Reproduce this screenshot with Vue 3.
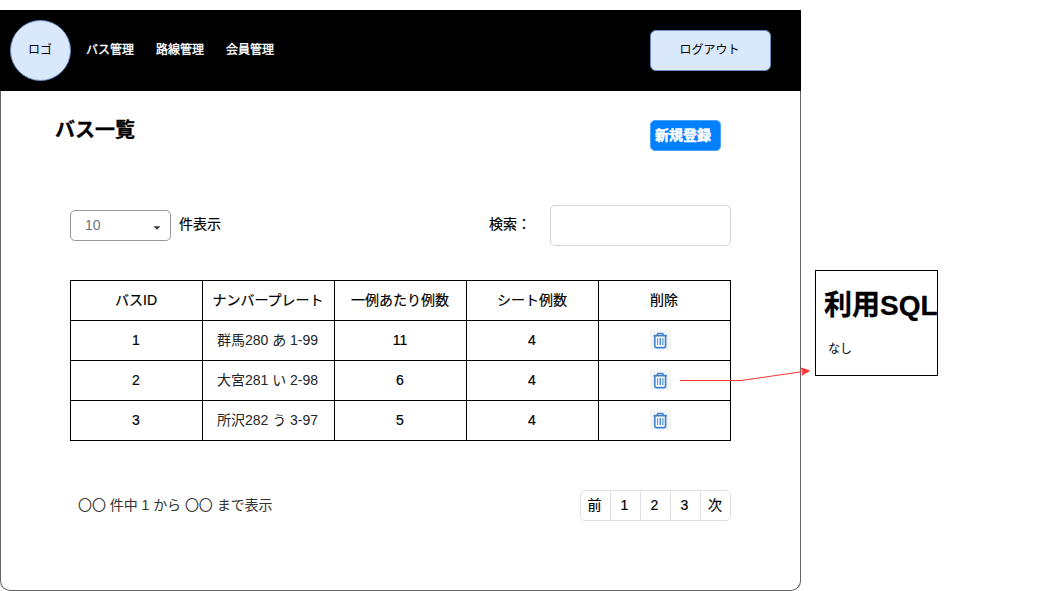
<script setup>
const nav = ['バス管理', '路線管理', '会員管理']
const columns = ['バスID', 'ナンバープレート', '一例あたり例数', 'シート例数', '削除']
const buses = [
  { id: 1, plate: '群馬280 あ 1-99', rows: 11, seats: 4 },
  { id: 2, plate: '大宮281 い 2-98', rows: 6, seats: 4 },
  { id: 3, plate: '所沢282 う 3-97', rows: 5, seats: 4 },
]
const pages = ['前', '1', '2', '3', '次']
</script>

<template>
  <div class="canvas">
    <div class="window">
      <header class="header">
        <div class="logo">ロゴ</div>
        <nav class="nav">
          <a v-for="item in nav" :key="item">{{ item }}</a>
        </nav>
        <button class="logout">ログアウト</button>
      </header>
      <main class="body">
        <div class="title-row">
          <h1>バス一覧</h1>
          <button class="create">新規登録</button>
        </div>
        <div class="filters">
          <div class="select">
            <span>10</span>
            <svg width="8" height="4" viewBox="0 0 8 4"><path d="M0.6 0.3H7.4L4 3.8Z" fill="#343a40" /></svg>
          </div>
          <span class="label">件表示</span>
          <span class="label search-label">検索：</span>
          <input class="search" type="text" />
        </div>
        <div class="table">
          <div v-for="c in columns" :key="c" class="cell medium">{{ c }}</div>
          <template v-for="b in buses" :key="b.id">
            <div class="cell medium">{{ b.id }}</div>
            <div class="cell plate">{{ b.plate }}</div>
            <div class="cell medium">{{ b.rows }}</div>
            <div class="cell medium">{{ b.seats }}</div>
            <div class="cell trash">
              <svg width="21" height="20" viewBox="0 0 21 20" fill="none">
                <rect width="21" height="20" fill="#f5f5f5" />
                <path d="M4.2 6H16.2V16.5Q16.2 18.4 14.3 18.4H6.1Q4.2 18.4 4.2 16.5Z" fill="#fff" stroke="#a9c9ea" stroke-width="1" />
                <path d="M4.9 6V15.9Q4.9 17.4 6.4 17.4H14Q15.5 17.4 15.5 15.9V6" stroke="#3f80c8" stroke-width="1.5" />
                <path d="M3.6 5.6H16.9" stroke="#3f80c8" stroke-width="1.6" />
                <path d="M7 5.3L7.9 3.4H12.7L13.6 5.3" stroke="#3f80c8" stroke-width="1.5" stroke-linejoin="round" />
                <path d="M7.6 8V15M12.9 8V15" stroke="#6ba0d8" stroke-width="1.4" />
                <path d="M10.3 8V15" stroke="#3f80c8" stroke-width="1.3" />
              </svg>
            </div>
          </template>
        </div>
        <div class="footer">
          <span class="summary">〇〇 件中 1 から 〇〇 まで表示</span>
          <div class="pager">
            <span v-for="p in pages" :key="p">{{ p }}</span>
          </div>
        </div>
      </main>
    </div>
    <aside class="note">
      <h2>利用SQL</h2>
      <p>なし</p>
    </aside>
    <svg class="arrow" width="134" height="20" viewBox="678 364 134 20" fill="none">
      <path d="M680 380.5H741L803 371.6" stroke="#ff3333" stroke-width="1" />
      <path d="M809.4 370.7L802 375.2L803.3 371.6L801 368Z" fill="#ff3333" stroke="#ff3333" />
    </svg>
  </div>
</template>

<style>
body {
  margin: 0;
  background: #fff;
}
</style>

<style scoped>
* {
  box-sizing: border-box;
}
.canvas {
  position: relative;
  display: flex;
  gap: 14px;
  width: 1041px;
  height: 591px;
  padding-top: 10px;
  overflow: hidden;
  color: #000;
  font-family: "Liberation Sans", "Noto Sans CJK JP", sans-serif;
  font-size: 14px;
  line-height: 20px;
  white-space: nowrap;
}
button {
  margin: 0;
  padding: 0;
  font: inherit;
  color: inherit;
}
.window {
  flex: none;
  width: 801px;
  height: 581px;
  border: 1px solid #666;
  border-top: 0;
  border-radius: 0 0 10px 10px;
}
.header {
  display: flex;
  align-items: center;
  height: 81px;
  margin: 0 -1px;
  padding: 0 30px 0 10px;
  background: #000;
  font-size: 12px;
}
.logo {
  display: flex;
  align-items: center;
  justify-content: center;
  width: 61px;
  height: 61px;
  padding: 0 1px 2px 0;
  border: 1px solid #6c8ebf;
  border-radius: 50%;
  background: #dae8fc;
}
.nav {
  display: flex;
  gap: 22px;
  margin-left: 15px;
  padding-bottom: 2px;
  color: #fff;
  -webkit-text-stroke: 0.35px #fff;
}
.logout {
  width: 121px;
  height: 41px;
  margin-left: auto;
  padding: 0 2px 2px 0;
  border: 1px solid #6c8ebf;
  border-radius: 6px;
  background: #dae8fc;
}
.body {
  padding: 29px 69px 0;
}
.title-row {
  display: flex;
  justify-content: space-between;
  height: 31px;
  margin: 0 10px 0 -15px;
}
h1 {
  margin: -3px 0 0;
  font-size: 20px;
  line-height: 26px;
  font-weight: 700;
  -webkit-text-stroke: 0.3px #000;
}
.create {
  width: 71px;
  height: 31px;
  padding: 0 5px 2px 0;
  border: 1px solid #4aa3ff;
  border-radius: 5px;
  background: #007fff;
  color: #fff;
  font-weight: 700;
  -webkit-text-stroke: 0.5px #fff;
}
.filters {
  display: flex;
  align-items: center;
  height: 41px;
  margin-top: 54px;
}
.select {
  display: flex;
  align-items: center;
  justify-content: space-between;
  width: 101px;
  height: 31px;
  padding: 0 9px 0 14px;
  border: 1px solid #999;
  border-radius: 5px;
  color: #6c757d;
}
.select span {
  padding-bottom: 2px;
}
.select svg {
  margin-top: 5px;
}
.label {
  margin-left: 8px;
  padding-bottom: 4px;
  -webkit-text-stroke: 0.2px #000;
}
.search-label {
  margin-left: auto;
  margin-right: 19px;
}
.search {
  width: 181px;
  height: 41px;
  border: 1px solid #ced4da;
  border-radius: 5px;
  outline: none;
}
.table {
  display: grid;
  grid-template-columns: repeat(5, 132px);
  grid-auto-rows: 40px;
  width: 661px;
  margin-top: 34px;
  border-top: 1px solid #000;
  border-left: 1px solid #000;
}
.cell {
  display: flex;
  align-items: center;
  justify-content: center;
  padding: 0 1px 2px 0;
  border-right: 1px solid #000;
  border-bottom: 1px solid #000;
}
.medium {
  -webkit-text-stroke: 0.2px #000;
}
.plate {
  padding-right: 2px;
  color: #212529;
}
.trash {
  justify-content: flex-start;
  padding: 0 0 1px 51px;
}
.footer {
  display: flex;
  align-items: center;
  justify-content: space-between;
  height: 31px;
  margin-top: 49px;
}
.summary {
  margin-left: 8px;
  padding-bottom: 2px;
  color: #333;
  letter-spacing: -0.04px;
}
.pager {
  display: flex;
  width: 151px;
  height: 31px;
  border: 1px solid #dee2e6;
  border-radius: 5px;
}
.pager span {
  width: 30px;
  padding: 4px 2px 0 0;
  border-right: 1px solid #dee2e6;
  text-align: center;
  -webkit-text-stroke: 0.2px #000;
}
.pager span:last-child {
  width: 29px;
  padding-right: 1px;
  border-right: 0;
}
.note {
  flex: none;
  width: 123px;
  height: 106px;
  margin-top: 260px;
  padding: 18px 0 0 8px;
  border: 1px solid #000;
}
h2 {
  margin: 0;
  font-size: 28px;
  line-height: 34px;
  font-weight: 700;
  -webkit-text-stroke: 0.3px #000;
}
.note p {
  margin: 16px 0 0 4px;
  font-size: 12px;
  line-height: 20px;
}
.arrow {
  position: absolute;
  left: 678px;
  top: 364px;
}
</style>
